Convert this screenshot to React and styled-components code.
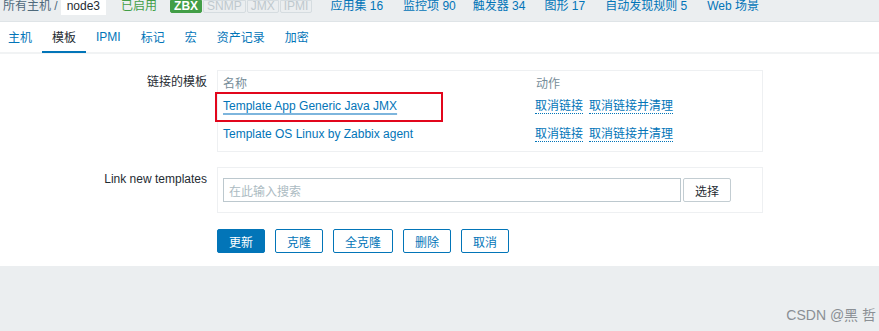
import React from 'react';
import styled, { createGlobalStyle } from 'styled-components';

const Global = createGlobalStyle`
  html, body { margin: 0; padding: 0; background: #ebeef0; }
  body {
    font-family: "Liberation Sans", Arial, "Noto Sans CJK SC", sans-serif;
    font-size: 12px;
    color: #1f2c33;
  }
  * { box-sizing: border-box; }
`;

const Page = styled.div`
  position: relative;
  width: 879px;
  height: 331px;
  overflow: hidden;
  display: flex;
  flex-direction: column;
  background: #ebeef0;
`;

const TopBar = styled.div`
  height: 22px;
  border-bottom: 1px solid #dfe4e7;
  background: #ebeef0;
  display: flex;
  align-items: flex-start;
  padding-left: 3px;
  line-height: 13px;
  white-space: nowrap;
`;

const Crumb = styled.span`
  color: #4f6a7c;
`;

const HostBox = styled.span`
  margin-left: 3px;
  background: #ffffff;
  height: 15px;
  padding: 0 6px;
  color: #1f2c33;
`;

const Status = styled.span`
  margin-left: 15px;
  color: #429e47;
`;

const Badges = styled.span`
  margin-left: 13px;
  display: flex;
`;

const Badge = styled.span`
  height: 13px;
  line-height: 11px;
  padding: 0 3px;
  margin-right: 1px;
  border: 1px solid ${p => (p.$on ? '#429e47' : '#d5dce0')};
  background: ${p => (p.$on ? '#429e47' : '#ebeef0')};
  color: ${p => (p.$on ? '#ffffff' : '#bfc9ce')};
  font-weight: ${p => (p.$on ? 'bold' : 'normal')};
  border-radius: 0 0 2px 2px;
`;

const TopLink = styled.span`
  color: #0275b8;
  margin-left: ${p => p.$ml || 19}px;
`;

const Tabs = styled.div`
  height: 32px;
  background: #ffffff;
  border-bottom: 2px solid #f1f3f4;
  display: flex;
  align-items: flex-start;
  margin-left: -2px;
`;

const Tab = styled.div`
  height: 31px;
  padding: 0 10px;
  display: flex;
  align-items: center;
  color: ${p => (p.$active ? '#1f2c33' : '#0275b8')};
  border-bottom: 2px solid ${p => (p.$active ? '#0275b8' : 'transparent')};
  position: relative;
`;

const Content = styled.div`
  background: #ffffff;
  height: 212px;
  padding-top: 16px;
`;

const FormGrid = styled.div`
  display: grid;
  grid-template-columns: 207px 546px;
  column-gap: 10px;
  row-gap: 15px;
`;

const Label = styled.div`
  text-align: right;
  padding-top: 5px;
  line-height: 14px;
  color: #1f2c33;
`;

const Box = styled.div`
  position: relative;
  border: 1px solid #eef0f2;
  padding: ${p => p.$pad || '5px'};
`;

const Row = styled.div`
  display: grid;
  grid-template-columns: 313px 1fr;
  align-items: center;
  height: ${p => p.$h}px;
  line-height: 14px;
`;

const HeadCell = styled.div`
  color: #768d99;
`;

const NameLink = styled.span`
  color: #0275b8;
  text-decoration: ${p => (p.$hover ? 'underline' : 'none')};
  text-decoration-color: #7db5dd;
  text-decoration-thickness: 2px;
  text-underline-offset: 3px;
`;

const Actions = styled.div`
  display: flex;
  gap: 6px;
  margin-left: -1px;
`;

const ActionLink = styled.span`
  color: #0275b8;
  border-bottom: 1px dotted #0275b8;
  line-height: 14px;
`;

const Highlight = styled.div`
  position: absolute;
  left: -3px;
  top: 21px;
  width: 228px;
  height: 30px;
  border: 2px solid #e2061c;
  pointer-events: none;
`;

const SearchRow = styled.div`
  display: flex;
  align-items: center;
`;

const SearchInput = styled.div`
  width: 458px;
  height: 24px;
  border: 1px solid #bcc8ce;
  padding-left: 5px;
  display: flex;
  align-items: center;
  color: #acbbc2;
  background: #ffffff;
`;

const SelectButton = styled.div`
  margin-left: 2px;
  width: 48px;
  height: 24px;
  border: 1px solid #c3cdd2;
  border-radius: 2px;
  display: flex;
  align-items: center;
  justify-content: center;
  color: #1f2c33;
  background: #ffffff;
`;

const ButtonRow = styled.div`
  grid-column: 2;
  display: flex;
  gap: 10px;
  padding-top: 1px;
`;

const Button = styled.div`
  height: 24px;
  padding: 0 11px;
  border: 1px solid #0275b8;
  border-radius: 2px;
  display: flex;
  align-items: center;
  background: ${p => (p.$primary ? '#0275b8' : '#ffffff')};
  color: ${p => (p.$primary ? '#ffffff' : '#0275b8')};
`;

const Footer = styled.div`
  flex: 1;
  background: #ebeef0;
`;

const Watermark = styled.div`
  position: absolute;
  right: 3px;
  bottom: 7px;
  font-size: 14px;
  color: #8a8f94;
`;

export default function App() {
  return (
    <Page>
      <Global />
      <TopBar>
        <Crumb>所有主机 /</Crumb>
        <HostBox>node3</HostBox>
        <Status>已启用</Status>
        <Badges>
          <Badge $on>ZBX</Badge>
          <Badge>SNMP</Badge>
          <Badge>JMX</Badge>
          <Badge>IPMI</Badge>
        </Badges>
        <TopLink $ml={17}>应用集 16</TopLink>
        <TopLink $ml={20}>监控项 90</TopLink>
        <TopLink $ml={17}>触发器 34</TopLink>
        <TopLink $ml={19}>图形 17</TopLink>
        <TopLink $ml={20}>自动发现规则 5</TopLink>
        <TopLink $ml={20}>Web 场景</TopLink>
      </TopBar>
      <Tabs>
        <Tab>主机</Tab>
        <Tab $active>模板</Tab>
        <Tab>IPMI</Tab>
        <Tab>标记</Tab>
        <Tab>宏</Tab>
        <Tab>资产记录</Tab>
        <Tab>加密</Tab>
      </Tabs>
      <Content>
        <FormGrid>
          <Label>链接的模板</Label>
          <Box $pad="5px 5px 3px">
            <Row $h={16}>
              <HeadCell>名称</HeadCell>
              <HeadCell>动作</HeadCell>
            </Row>
            <Row $h={28}>
              <div><NameLink $hover>Template App Generic Java JMX</NameLink></div>
              <Actions>
                <ActionLink>取消链接</ActionLink>
                <ActionLink>取消链接并清理</ActionLink>
              </Actions>
            </Row>
            <Row $h={28}>
              <div><NameLink>Template OS Linux by Zabbix agent</NameLink></div>
              <Actions>
                <ActionLink>取消链接</ActionLink>
                <ActionLink>取消链接并清理</ActionLink>
              </Actions>
            </Row>
            <Highlight />
          </Box>

          <Label>Link new templates</Label>
          <Box $pad="10px 5px">
            <SearchRow>
              <SearchInput>在此输入搜索</SearchInput>
              <SelectButton>选择</SelectButton>
            </SearchRow>
          </Box>

          <ButtonRow>
            <Button $primary>更新</Button>
            <Button>克隆</Button>
            <Button>全克隆</Button>
            <Button>删除</Button>
            <Button>取消</Button>
          </ButtonRow>
        </FormGrid>
      </Content>
      <Footer />
      <Watermark>CSDN @黑 哲</Watermark>
    </Page>
  );
}
